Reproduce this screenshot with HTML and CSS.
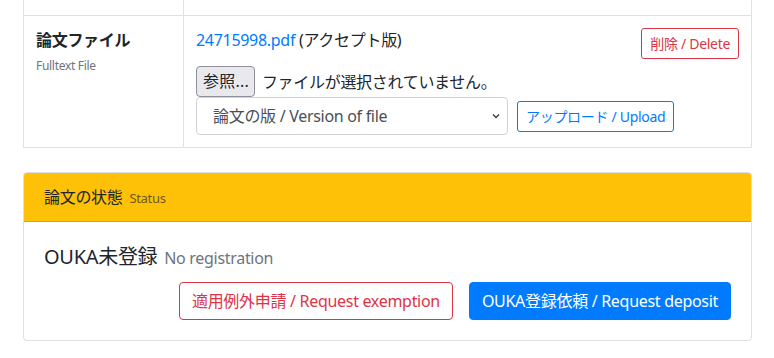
FILE: index.html
```html
<!DOCTYPE html>
<html lang="ja">
<head>
    <meta charset="UTF-8">
    <meta name="viewport" content="width=device-width, initial-scale=1.0">
    <title>論文の状態</title>
    <link rel="stylesheet" href="styles.css">
</head>
<body>

    <div class="main-container">
        <table class="info-table">
            <tr class="prev-row">
                <th></th>
                <td></td>
            </tr>
            <tr>
                <th>
                    <div class="field-title">論文ファイル</div>
                    <small class="field-sub">Fulltext File</small>
                </th>
                <td>
                    <div class="file-line">
                        <span><a href="#" class="file-link">24715998.pdf</a> (アクセプト版)</span>
                        <button class="btn btn-sm btn-outline-danger">削除 / Delete</button>
                    </div>
                    <div class="file-input">
                        <span class="browse-btn">参照...</span>
                        <span>ファイルが選択されていません。</span>
                    </div>
                    <div class="upload-line">
                        <div class="version-select">
                            <span>論文の版 / Version of file</span>
                            <svg width="8" height="6" viewBox="0 0 8 6"><path d="M1 1.5L4 4.5 7 1.5" fill="none" stroke="#343a40" stroke-width="1.3"/></svg>
                        </div>
                        <button class="btn btn-sm btn-outline-primary">アップロード / Upload</button>
                    </div>
                </td>
            </tr>
        </table>

        <div class="card">
            <div class="card-header">
                論文の状態 <small class="muted">Status</small>
            </div>
            <div class="card-body">
                <h5 class="status-title">OUKA未登録 <small class="muted">No registration</small></h5>
                <div class="actions">
                    <button class="btn btn-outline-danger">適用例外申請 / Request exemption</button>
                    <button class="btn btn-primary">OUKA登録依頼 / Request deposit</button>
                </div>
            </div>
        </div>
    </div>

</body>
</html>
```

FILE: styles.css
```css
*,
::after,
::before {
    margin: 0;
    padding: 0;
    box-sizing: border-box;
}

html {
    font-family: "Noto Sans", "Noto Sans CJK JP", sans-serif;
    font-size: 16px;
    line-height: 1.5;
    letter-spacing: -0.3px;
    color: #212529;
}

body {
    background-color: #fff;
    overflow: hidden;
}

.main-container {
    width: 729px;
    margin-left: 23px;
    margin-top: -30px;
}

/* table */
.info-table {
    width: 100%;
    border-collapse: collapse;
    margin-bottom: 24px;
}

.info-table th,
.info-table td {
    border: 1px solid #dee2e6;
    padding: 12px;
    text-align: left;
    vertical-align: top;
}

.info-table th {
    width: 160px;
}

.prev-row th,
.prev-row td {
    height: 45px;
}

.field-title {
    font-weight: bold;
}

.field-sub {
    display: block;
    font-size: 12px;
    font-weight: normal;
    color: #6c757d;
    margin-top: 5px;
}

.file-line {
    display: flex;
    justify-content: space-between;
    align-items: flex-start;
}

.file-link {
    color: #007bff;
    text-decoration: none;
}

.file-input {
    display: flex;
    align-items: center;
    gap: 7px;
    margin-top: 7px;
}

.browse-btn {
    background-color: #e9e9ed;
    border: 1px solid #8f8f9d;
    border-radius: 4px;
    padding: 2px 5px 3px 6px;
    letter-spacing: 0.2px;
    line-height: 24px;
}

.upload-line {
    display: flex;
    align-items: center;
    gap: 9px;
    margin-top: 0;
}

.version-select {
    width: 312px;
    height: 38px;
    display: flex;
    align-items: center;
    justify-content: space-between;
    border: 1px solid #ced4da;
    border-radius: 4px;
    padding: 0 7px 0 16px;
    color: #495057;
}

/* buttons */
.btn {
    font-family: inherit;
    font-size: 16px;
    letter-spacing: inherit;
    line-height: 24px;
    padding: 6px 12px;
    border-radius: 4px;
    border: 1px solid transparent;
    background-color: transparent;
    cursor: pointer;
}

.btn-sm {
    font-size: 14px;
    line-height: 21px;
    padding: 4px 8px;
    border-radius: 3px;
}

.btn-outline-danger {
    color: #dc3545;
    border-color: #dc3545;
}

.btn-outline-primary {
    color: #007bff;
    border-color: #007bff;
}

.btn-primary {
    color: #fff;
    background-color: #007bff;
    border-color: #007bff;
}

/* card */
.card {
    border: 1px solid rgba(0, 0, 0, 0.125);
    border-radius: 4px;
    overflow: hidden;
}

.card-header {
    background-color: #ffc107;
    padding: 12px 20px;
    border-bottom: 1px solid #dfa800;
}

.card-header .muted {
    font-size: 13px;
    margin-left: 3px;
    color: #6c5a1c;
}

.card-body {
    padding: 20px;
}

.status-title {
    font-size: 20px;
    font-weight: normal;
    line-height: 30px;
    margin-bottom: 9px;
}

.status-title .muted {
    font-size: 16px;
    margin-left: 2px;
}

.muted {
    color: #6c757d;
}

.actions {
    display: flex;
    justify-content: flex-end;
    gap: 16px;
}
```
